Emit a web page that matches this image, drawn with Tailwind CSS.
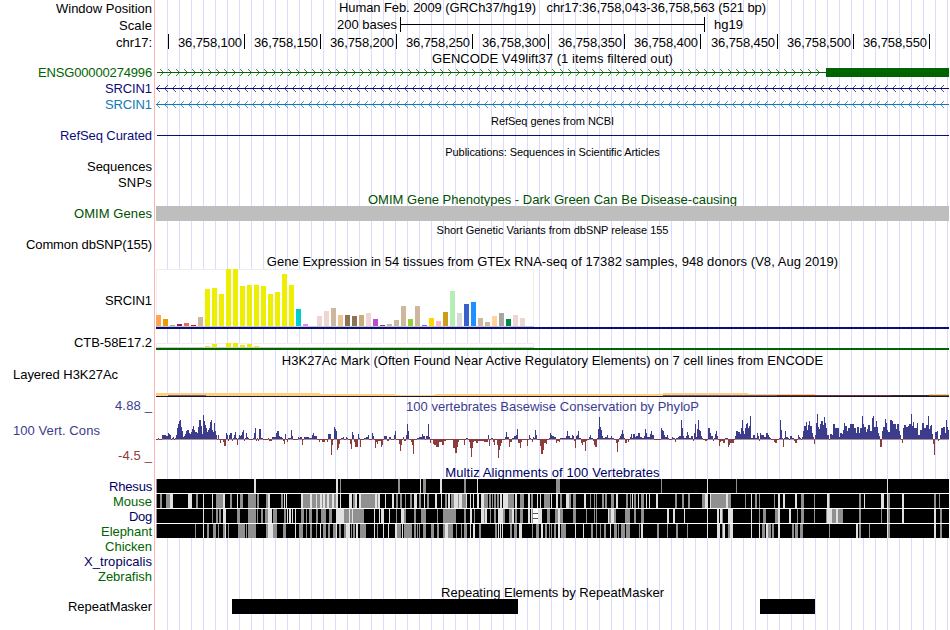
<!DOCTYPE html>
<html lang="en">
<head>
  <meta charset="UTF-8" />
  <meta name="viewport" content="width=device-width, initial-scale=1.0" />
  <title>Genome Browser hg19 chr17:36,758,043-36,758,563</title>
  <script src="https://cdn.jsdelivr.net/npm/@tailwindcss/browser@4"></script>
</head>
<body class="bg-white">

  <main class="relative w-[950px] h-[630px] overflow-hidden font-['Liberation_Sans',Arial,sans-serif] text-[13px] leading-4 text-black whitespace-nowrap">
    <!-- guide lines behind the tracks -->
    <div class="absolute inset-y-0 left-[154px] w-px bg-[#ffb4b4]"></div>
    <div class="absolute inset-y-0 left-[167px] right-0 bg-[repeating-linear-gradient(to_right,#dcdcfa_0_1px,transparent_1px_12px)]"></div>

    <div class="relative flex flex-col">

      <!-- position, scale and ruler -->
      <div class="flex h-[17px]">
        <div class="w-[152px] mr-1 pt-px text-right"><span data-w="96">Window Position</span></div>
        <div class="w-[793px] text-center"><span data-w="427">Human Feb. 2009 (GRCh37/hg19) &nbsp; chr17:36,758,043-36,758,563 (521 bp)</span></div>
      </div>
      <div class="flex h-[17px]">
        <div class="w-[152px] mr-1 pt-px text-right"><span data-w="33">Scale</span></div>
        <div class="w-[241px] mr-[3px] text-right"><span data-w="60">200 bases</span></div>
        <div class="w-[305px] h-[15px] mr-[9px] border-x border-black pt-[7px]"><div class="h-px bg-black"></div></div>
        <span data-w="29">hg19</span>
      </div>
      <div class="flex h-[17px]">
        <div class="w-[152px] mr-1 pt-px text-right"><span data-w="36">chr17:</span></div>
        <div class="w-[13px] h-[15px] border-r border-black"></div>
        <div class="w-[76px] h-[15px] border-r border-black pt-px pr-[2px] text-right"><span data-w="64">36,758,100</span></div>
        <div class="w-[76px] h-[15px] border-r border-black pt-px pr-[2px] text-right"><span data-w="64">36,758,150</span></div>
        <div class="w-[76px] h-[15px] border-r border-black pt-px pr-[2px] text-right"><span data-w="64">36,758,200</span></div>
        <div class="w-[76px] h-[15px] border-r border-black pt-px pr-[2px] text-right"><span data-w="64">36,758,250</span></div>
        <div class="w-[76px] h-[15px] border-r border-black pt-px pr-[2px] text-right"><span data-w="64">36,758,300</span></div>
        <div class="w-[76px] h-[15px] border-r border-black pt-px pr-[2px] text-right"><span data-w="64">36,758,350</span></div>
        <div class="w-[76px] h-[15px] border-r border-black pt-px pr-[2px] text-right"><span data-w="64">36,758,400</span></div>
        <div class="w-[77px] h-[15px] border-r border-black pt-px pr-[2px] text-right"><span data-w="64">36,758,450</span></div>
        <div class="w-[76px] h-[15px] border-r border-black pt-px pr-[2px] text-right"><span data-w="64">36,758,500</span></div>
        <div class="w-[76px] h-[15px] border-r border-black pt-px pr-[2px] text-right"><span data-w="64">36,758,550</span></div>
      </div>

      <!-- GENCODE -->
      <div class="ml-[156px] w-[793px] h-[14px] text-center"><span data-w="241">GENCODE V49lift37 (1 items filtered out)</span></div>
      <div class="flex h-4 text-[#006400]">
        <div class="w-[152px] mr-1 text-right"><span data-w="114">ENSG00000274996</span></div>
        <svg id="gene1" class="w-[794px] h-4" viewBox="156 65 794 16" shape-rendering="crispEdges"></svg>
      </div>
      <div class="flex h-4 text-[#0c0c78]">
        <div class="w-[152px] mr-1 text-right"><span data-w="47">SRCIN1</span></div>
        <svg id="gene2" class="w-[794px] h-4" viewBox="156 81 794 16" shape-rendering="crispEdges"></svg>
      </div>
      <div class="flex h-4 text-[#1478b4]">
        <div class="w-[152px] mr-1 text-right"><span data-w="47">SRCIN1</span></div>
        <svg id="gene3" class="w-[794px] h-4" viewBox="156 97 794 16" shape-rendering="crispEdges"></svg>
      </div>

      <!-- RefSeq -->
      <div class="ml-[156px] w-[793px] h-[15px] text-center text-[11px]"><span data-w="123" data-size="11">RefSeq genes from NCBI</span></div>
      <div class="flex h-4 text-[#0c0c78]">
        <div class="w-[152px] mr-1 text-right"><span data-w="92">RefSeq Curated</span></div>
        <div class="w-[793px] pl-px pt-[7px]"><div class="h-px bg-[#0c0c78]"></div></div>
      </div>

      <!-- Publications -->
      <div class="ml-[156px] w-[793px] h-[15px] text-center text-[11px]"><span data-w="215" data-size="11">Publications: Sequences in Scientific Articles</span></div>
      <div class="w-[152px] h-4 text-right"><span data-w="65">Sequences</span></div>
      <div class="w-[152px] h-[17px] text-right"><span data-w="34">SNPs</span></div>

      <!-- OMIM -->
      <div class="ml-[156px] w-[793px] h-[14px] text-center text-[#005000]"><span data-w="369">OMIM Gene Phenotypes - Dark Green Can Be Disease-causing</span></div>
      <div class="flex h-4 text-[#005000]">
        <div class="w-[152px] mr-1 text-right"><span data-w="78">OMIM Genes</span></div>
        <div class="w-[793px] h-[15px] bg-[#bebebe]"></div>
      </div>

      <!-- dbSNP -->
      <div class="ml-[156px] w-[793px] h-[15px] text-center text-[11px]"><span data-w="232" data-size="11">Short Genetic Variants from dbSNP release 155</span></div>
      <div class="w-[152px] h-[17px] text-right"><span data-w="126">Common dbSNP(155)</span></div>

      <!-- GTEx -->
      <div class="ml-[156px] w-[793px] h-[14px] text-center"><span data-w="572">Gene Expression in 54 tissues from GTEx RNA-seq of 17382 samples, 948 donors (V8, Aug 2019)</span></div>
      <div class="flex h-[67px]">
        <div class="w-[152px] mr-1 pt-[25px] text-right"><span data-w="47">SRCIN1</span></div>
        <svg id="gtex1" class="w-[794px] h-[67px]" viewBox="156 268 794 67" shape-rendering="crispEdges"></svg>
      </div>
      <div class="flex h-[18px]">
        <div class="w-[152px] mr-1 text-right"><span data-w="78">CTB-58E17.2</span></div>
        <svg id="gtex2" class="w-[794px] h-[18px]" viewBox="156 335 794 18" shape-rendering="crispEdges"></svg>
      </div>

      <!-- H3K27Ac -->
      <div class="ml-[156px] w-[793px] h-[14px] text-center"><span data-w="542">H3K27Ac Mark (Often Found Near Active Regulatory Elements) on 7 cell lines from ENCODE</span></div>
      <div class="flex h-[31px]">
        <div class="w-[139px] ml-[13px] mr-1"><span data-w="105">Layered H3K27Ac</span></div>
        <svg class="w-[794px] h-[31px]" viewBox="156 367 794 31" shape-rendering="crispEdges">
          <path fill="#ffcf80" d="M156 393H320V394H395V395H435V394H663V393H748V394H815V395H663V396H156Z" />
          <path fill="#ffcf80" d="M929 394h20v1h-20z" />
          <path fill="#7a5c70" d="M168 395h38v1h-38z M663 395h114v1h-114z" />
          <path fill="#782c3c" d="M777 395h114v1h-114z" />
          <path fill="#3c2830" d="M891 395h38v1h-38z" />
          <path fill="#7a6030" d="M929 395h20v1h-20z" />
          <path fill="#1c1428" d="M156 396h793v1h-793z" />
        </svg>
      </div>

      <!-- Conservation -->
      <div class="flex h-[67px] text-[#3c3c8c]">
        <div class="w-[139px] ml-[13px] mr-1 flex flex-col gap-[9px]">
          <div class="text-right"><span data-w="37">4.88 _</span></div>
          <div><span data-w="87">100 Vert. Cons</span></div>
          <div class="text-right text-[#8c3c3c]"><span data-w="34">-4.5 _</span></div>
        </div>
        <div class="w-[794px] pt-px">
          <div class="w-[793px] h-[13px] text-center"><span data-w="293">100 vertebrates Basewise Conservation by PhyloP</span></div>
          <svg id="phylop" class="w-[794px] h-[53px]" viewBox="156 412 794 53" shape-rendering="crispEdges"></svg>
        </div>
      </div>

      <!-- Multiz -->
      <div class="ml-[156px] w-[793px] h-[14px] text-center text-[#000064]"><span data-w="215">Multiz Alignments of 100 Vertebrates</span></div>
      <div class="flex h-[15px] text-[#000064]">
        <div class="w-[152px] mr-1 text-right"><span data-w="43">Rhesus</span></div>
        <svg id="rhesus" class="w-[793px] h-[15px] bg-white" viewBox="156 0 793 15" shape-rendering="crispEdges"></svg>
      </div>
      <div class="flex h-[15px] text-[#006400]">
        <div class="w-[152px] mr-1 text-right"><span data-w="39">Mouse</span></div>
        <svg id="mouse" class="w-[793px] h-[15px] bg-white" viewBox="156 0 793 15" shape-rendering="crispEdges"></svg>
      </div>
      <div class="flex h-[15px] text-[#000064]">
        <div class="w-[152px] mr-1 text-right"><span data-w="23">Dog</span></div>
        <svg id="dog" class="w-[793px] h-[15px] bg-white" viewBox="156 0 793 15" shape-rendering="crispEdges"></svg>
      </div>
      <div class="flex h-[15px] text-[#006400]">
        <div class="w-[152px] mr-1 text-right"><span data-w="51">Elephant</span></div>
        <svg id="elephant" class="w-[793px] h-[14px] bg-white" viewBox="156 0 793 14" shape-rendering="crispEdges"></svg>
      </div>
      <div class="w-[152px] h-[15px] text-right text-[#006400]"><span data-w="47">Chicken</span></div>
      <div class="w-[152px] h-[15px] text-right text-[#000064]"><span data-w="68">X_tropicalis</span></div>
      <div class="w-[152px] h-4 text-right text-[#006400]"><span data-w="54">Zebrafish</span></div>

      <!-- RepeatMasker -->
      <div class="ml-[156px] w-[793px] h-[14px] text-center"><span data-w="223">Repeating Elements by RepeatMasker</span></div>
      <div class="flex h-4">
        <div class="w-[152px] text-right"><span data-w="84">RepeatMasker</span></div>
        <div class="ml-20 w-[286px] h-[15px] bg-black"></div>
        <div class="ml-[242px] w-[55px] h-[15px] bg-black"></div>
      </div>
    </div>
  </main>

  <script>
    const rect = (x, y, w, h, fill) => `<rect x="${x}" y="${y}" width="${w}" height="${h}" fill="${fill}"/>`;
    const put = (id, html) => { document.getElementById(id).innerHTML = html; };

    // spread the letters so that each text takes its width
    const ctx = document.createElement("canvas").getContext("2d");
    document.querySelectorAll("[data-w]").forEach(el => {
      ctx.font = `${el.dataset.size || 13}px "Liberation Sans", Arial, sans-serif`;
      const w = ctx.measureText(el.textContent).width;
      el.style.letterSpacing = (el.dataset.w - w) / el.textContent.length + "px";
    });

    // intron lines with a strand arrow every 8px, dir 1 = right, -1 = left
    function intron(y, from, to, tip, last, dir) {
      let d = "";
      for (let x = tip; x <= last; x += 8) {
        for (let i = 1; i <= 3; i++) {
          d += `M${x - dir * (i - 1)} ${y - i}h1v1h-1z M${x - dir * (i - 1)} ${y + i}h1v1h-1z`;
        }
      }
      return rect(from, y, to - from, 1, "currentColor") + `<path d="${d}" fill="currentColor" opacity="0.75"/>`;
    }
    put("gene1", intron(72, 157, 826, 162, 818, 1) + rect(826, 68, 123, 9, "currentColor"));
    put("gene2", intron(88, 156, 949, 157, 941, -1));
    put("gene3", intron(104, 156, 949, 157, 941, -1));

    // GTEx bars: height and colour per tissue
    const tissues = [
      [11, "#ffa54f"], [7, "#ee9a00"], [1, "#8fbc8f"], [2, "#8b1c62"], [3, "#ee6a50"], [1, "#e01010"],
      [9, "#cdb79e"], [37, "#eeee00"], [38, "#eeee00"], [32, "#eeee00"], [57, "#eeee00"], [57, "#eeee00"],
      [40, "#eeee00"], [41, "#eeee00"], [41, "#eeee00"], [40, "#eeee00"], [32, "#eeee00"], [34, "#eeee00"],
      [52, "#eeee00"], [41, "#eeee00"], [17, "#00cdcd"], [2, "#ee82ee"], [0, "#9ac0cd"], [10, "#eed5d2"],
      [15, "#eed5d2"], [18, "#cdb79e"], [11, "#eec591"], [11, "#8b7355"], [10, "#8b7355"], [11, "#cdaa7d"],
      [13, "#eed5d2"], [7, "#b452cd"], [1, "#7a378b"], [2, "#cdb79e"], [6, "#cdb79e"], [20, "#cdb79e"],
      [7, "#9acd32"], [20, "#cdb79e"], [1, "#7a67ee"], [8, "#ffd700"], [5, "#ffb6c1"], [14, "#cd9b1d"],
      [35, "#b4eeb4"], [13, "#d9d9d9"], [22, "#3a5fcd"], [24, "#1e90ff"], [8, "#cdb79e"], [4, "#cdb79e"],
      [10, "#ffd39b"], [13, "#a6a6a6"], [7, "#008b45"], [11, "#eed5d2"], [8, "#eed5d2"], [0, "#ff00ff"]
    ];
    put("gtex1",
      rect(156, 269, 378, 58, "#eeeeee") + rect(157, 270, 376, 56, "#fff") + rect(156, 326, 378, 1, "#c8c8c8") +
      tissues.map(([h, c], i) => rect(156 + i * 7, 326 - h, 5, h, c)).join("") +
      rect(156, 327, 793, 2, "#0c0c78"));
    put("gtex2",
      rect(156, 343, 378, 5, "#eeeeee") + rect(157, 344, 376, 3, "#fff") + rect(156, 347, 378, 1, "#c8c8c8") +
      [[7, 1], [8, 3], [10, 4], [11, 4], [12, 2], [13, 3], [14, 1]].map(([i, h]) => rect(156 + i * 7, 347 - h, 5, h, "#eeee00")).join("") +
      rect(156, 348, 793, 2, "#006400"));

    // PhyloP scores, "x:height", each one holds until the next x
    const scores = `
      156:-1 158:1 159:-1 162:4 166:3 168:6 169:5 170:4 171:-1 172:1 173:2 174:-1 175:1 176:4 177:11 178:15 179:18 180:19 181:12
      182:8 183:2 184:3 185:5 186:8 187:9 189:6 190:5 191:7 192:10 193:13 194:9 195:7 197:6 198:12 199:19 201:13 202:5 203:24 204:18
      205:14 206:11 207:7 208:9 209:11 210:17 211:19 212:9 213:7 214:16 215:8 216:4 217:-1 218:4 219:-1 220:-4 221:-1 223:-3 224:-7
      226:6 227:4 228:-2 229:4 230:6 232:-2 233:1 234:4 235:7 236:1 237:-6 238:1 239:4 240:3 241:4 242:7 243:9 244:-2 245:1 246:6
      247:2 248:1 249:-1 253:1 254:6 255:11 256:-2 257:1 258:-2 259:10 261:1 263:-1 268:1 269:-2 272:2 276:6 277:8 279:3 280:2
      282:1 283:-2 284:-5 285:5 286:-1 287:-3 288:1 291:9 292:3 293:-1 298:2 299:1 300:2 302:-6 303:-1 304:2 309:1 312:4 313:6
      314:3 317:-1 319:-3 320:-1 322:-3 325:-1 327:-3 328:5 331:-16 332:-6 333:-1 334:12 335:10 336:8 337:-11 338:-9 339:-5
      340:-1 341:1 343:2 344:-1 346:2 347:1 348:-1 350:-5 351:-10 352:7 353:4 354:-3 355:-8 358:5 359:1 360:-8 361:-1 364:1 366:2
      368:4 369:-1 372:6 373:3 374:-1 375:-9 376:-3 377:-5 378:-2 381:-8 382:-6 383:-1 384:3 387:-2 389:2 391:-1 394:4 395:8
      396:-1 399:-5 400:-12 401:-6 402:-1 403:2 404:-2 406:4 407:15 408:8 409:-1 411:-3 412:-6 413:-15 414:-1 417:1 419:2 422:5
      423:3 425:-1 426:3 428:15 429:2 430:-4 431:-1 433:-5 434:-6 436:-8 439:-3 442:-6 444:-2 446:-1 453:-9 455:-14 457:-8 458:-3
      459:-1 464:-6 465:-1 466:1 468:-1 469:-3 470:-9 471:-18 472:-9 473:-3 474:-2 476:-4 478:-2 484:-3 488:4 489:-7 490:-1 491:1
      493:-3 494:-6 495:-1 497:-6 498:-19 499:-11 500:-7 501:-4 502:-1 505:2 506:7 507:2 509:-8 510:-3 512:1 514:3 516:4 517:10
      518:-4 520:-9 521:-3 522:-1 527:-7 528:-1 529:4 530:1 531:-1 532:-3 533:2 534:1 535:9 536:4 537:-1 540:-7 541:-15 543:-11
      544:-4 546:-5 547:-1 549:1 550:6 551:4 552:3 554:2 556:-4 557:-2 559:-3 560:1 566:3 567:8 568:3 570:1 572:4 573:3 574:-2
      575:-9 576:3 577:4 578:8 579:1 581:-4 582:-6 583:-3 585:-12 586:-2 587:-1 589:2 590:4 591:1 593:-2 594:-6 595:-8 597:1
      598:10 599:22 600:12 601:9 602:3 603:1 605:2 607:4 608:1 611:3 612:1 614:-1 616:-4 617:-13 618:-3 619:1 620:3 621:5 622:9
      623:5 624:1 625:-4 627:-1 628:-3 629:-1 630:2 631:5 632:1 633:5 635:2 636:3 638:6 640:2 642:1 644:3 645:10 646:6 647:2
      650:5 651:8 652:4 654:-1 661:11 662:9 663:8 664:4 665:2 667:4 668:1 669:-1 672:2 673:1 675:-3 676:1 678:2 679:3 681:19
      682:11 683:3 684:1 686:3 687:7 688:4 689:1 691:3 693:-2 694:6 695:15 696:2 697:10 698:19 699:9 700:8 701:3 702:1 703:-1
      705:-2 707:-1 708:11 710:6 711:3 713:-2 714:1 715:5 716:8 717:3 718:-1 719:-7 720:-3 721:-2 723:-4 725:1 728:-8 729:-6
      730:-4 734:-1 735:3 736:8 738:7 740:5 741:11 742:19 743:8 744:5 745:11 746:15 747:16 748:11 749:13 750:23 751:1 753:4
      755:1 757:6 758:3 759:-2 760:6 761:4 764:2 766:6 768:4 769:2 770:1 771:-1 774:-3 775:-4 777:-1 779:1 780:19 781:9 782:1
      783:-8 784:1 785:8 786:2 788:1 789:-1 790:3 792:1 794:-2 795:-4 797:-1 798:4 799:2 800:1 801:-1 802:2 803:8 804:13 806:17
      807:9 808:14 809:18 810:13 812:6 813:2 814:-5 815:4 816:16 817:25 818:12 819:10 820:15 821:18 823:14 824:22 825:16 826:11
      827:4 829:-1 830:5 832:4 833:15 835:11 839:2 840:6 842:5 843:9 844:16 845:13 847:8 848:11 850:15 854:11 856:6 857:12 859:6
      860:11 862:23 863:15 864:12 866:7 867:10 868:14 870:8 872:21 873:23 874:12 876:18 877:12 878:6 879:3 880:-8 882:8 883:12
      885:20 886:16 887:9 888:7 890:19 892:18 893:15 896:10 897:15 899:8 900:4 901:-1 902:-4 903:11 904:14 906:12 908:13 909:15
      911:25 912:13 913:17 914:11 917:16 918:4 920:9 922:16 924:11 926:14 928:23 929:10 930:13 931:14 932:5 933:-5 934:-16
      935:7 937:8 938:-2 939:-1 940:4 941:11 943:12 945:6 946:19 947:12 948:9 949:0`.trim().split(/\s+/).map(s => s.split(":").map(Number));
    let bars = rect(156, 439, 793, 1, "#b48c96");
    for (let i = 0; i < scores.length - 1; i++) {
      const [x, h] = scores[i];
      const w = scores[i + 1][0] - x;
      bars += h > 0 ? rect(x, 439 - h, w, h, "#3c3c8c") : rect(x, 439, w, -h, "#8c3c3c");
    }
    put("phylop", bars);

    // alignment stripes: x, tone (g grey, l light, w white), optional width
    function align(id, stripes) {
      const tones = { g: "#909090", l: "#e1e1e1", w: "#ffffff" };
      put(id, rect(156, 0, 793, 14, "#000") + rect(156, 0, 1, 14, "#909090") + stripes.trim().split(/\s+/).map(s => {
        const [, x, t, w] = s.match(/(\d+)([glw])(\d*)/);
        return rect(x, 0, w || 1, 14, tones[t]);
      }).join("") + (id === "dog" ? rect(533, 4, 5, 1, "#555") + rect(533, 9, 5, 1, "#555") : ""));
    }
    align("rhesus", `254l2 336l2 340g 398g2 420l 423g3 440l2 464g2 477l 556g4 661g 707l 736g 887l`);
    align("mouse", `160g2 166g4 170l3 188l4 196g2 203l 212l 216g7 223l2 230g2 237l 240g3 248g8 257g2 266g2 268l2 281g2 284l 286l
      301l2 303g7 310l2 312g4 316l 317g3 320l2 322g 323l2 325g2 327l2 329g3 332l2 334g2 336l2 340l 349l3 353g2 355l2 359l2 361g14
      375l2 377g 378l2 385l 392l2 396g2 400g2 405g 410g2 414l3 419g2 424l 427g2 435l2 441l 445g2 448l2 451g3 454l4 458g 459l3
      462g4 466l 470l 473l 477l2 481l3 484g4 489g2 492g 494g2 497g2 500l2 503l5 508g6 515l2 520g4 528l2 531g2 537l 540l 544g6
      551l 556l2 560g2 566l3 569g2 573g3 584l2 590g 594g 596g 602g2 605g2 611g3 616l2 626g2 630g 632l 634g2 638l 641g3 646l 649l
      656l2 675g2 682g2 688g2 702g3 705l3 710l 711g15 726l2 728g3 745g 751l 755g2 759g 774g 778l2 783l2 795l2 801g3 814g 827l2
      829g 859g2 864l 881l3 887l 888g2 902l2 934g2 939g`);
    align("dog", `203l 212g 216g2 219g2 223l3 237g3 248g8 257g 261g2 265g3 268l4 273g4 284g2 287l 289l2 292l 295l 301g3 306g 309g3
      316g2 321g5 329g3 336l8 344g5 349l 350g2 352l 353g11 374l 379l 381l3 389l 396g 401l3 404g2 414g2 421g5 437g 443g3 446g10
      464g2 470l2 474g 481l3 484g 485l2 490g 494g2 498l3 501l2 503g2 509g3 512l2 515g2 520g3 528l2 531l 532g 533w5 538l4 547g3 555g3
      558l2 560g3 573g3 586g 594g 596g 608l 609g2 611l3 614g2 625g5 634g2 641g3 667l2 673l2 684l 707l 717l2 720l2 722g 728l5
      751l 759g 763g3 775g3 778l2 789l2 797g 801g3 814g 826g 827l2 829l3 832g4 836l2 838g5 859g2 881g 887l 888g2 902l2 934l2 940g2`);
    align("elephant", `195g 203l 207g2 213g3 218g 223g2 225l 228g 238g7 246g 248g8 266g2 268l5 273g4 283g3 295l 299g4 306g 310g2
      316g 320l 323g3 328g2 333g3 336l 339g2 344g2 346l4 351g 353g2 356l2 360g6 374l 377g 383l 388l 395l2 397g4 402l 404g8 414g2
      417g 419g 423g3 431g3 437g2 443g2 445l3 448g5 456g 461g 464g3 470l 473l2 479g2 495g2 498l 500l 502l 510g2 514g3 519l3
      532g 536g3 541l2 545g2 549g 551g 554g2 558l2 561g5 575l 583l 591g2 596g 600g 604g2 610l 614g3 618g 621g4 626g4 639g 641l2
      657g2 667g 676g2 687g 707l 717l3 722g 723l2 728g2 730l3 751l 759l 762g3 766l2 768g3 772g2 778l2 792g2 795g3 800g3 829g
      856l2 859g2 869g 887l 888g2 934l2 940g2`);
  </script>
</body>
</html>
